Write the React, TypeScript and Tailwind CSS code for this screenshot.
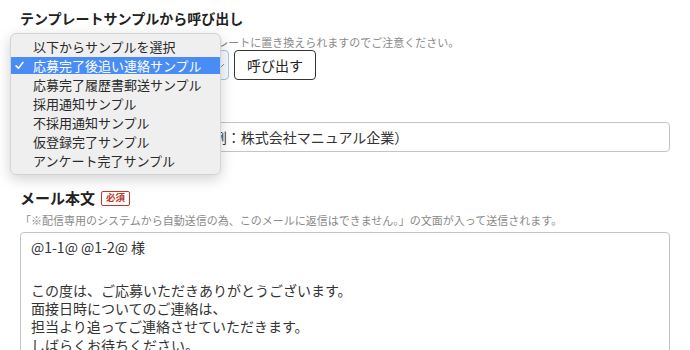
import { ChevronDown } from 'lucide-react'

const samples = [
  '以下からサンプルを選択',
  '応募完了後追い連絡サンプル',
  '応募完了履歴書郵送サンプル',
  '採用通知サンプル',
  '不採用通知サンプル',
  '仮登録完了サンプル',
  'アンケート完了サンプル'
]

const bodyLines = [
  'この度は、ご応募いただきありがとうございます。',
  '面接日時についてのご連絡は、',
  '担当より追ってご連絡させていただきます。',
  'しばらくお待ちください。'
]

function RequiredBadge() {
  return (
    <span className="ml-[6px] inline-flex h-[15px] items-center rounded-[2px] border border-[#c0392b] px-[4px] text-[9.5px] font-bold leading-none text-[#c0392b]">
      必須
    </span>
  )
}

function SampleMenu({ selected }: { selected: number }) {
  return (
    <ul className="absolute left-[10px] top-[33px] w-[211px] rounded-[6px] border border-[#d4d4d4] bg-[#efefef] pb-[4px] pt-[3px] shadow-[0_4px_14px_rgba(0,0,0,0.18)]">
      {samples.map((label, i) => (
        <li
          key={label}
          className={
            i === selected
              ? 'flex h-[19px] items-center bg-[#4a8cf6] bg-clip-content py-px text-[13px] text-white'
              : 'flex h-[19px] items-center text-[13px] text-[#2a2a2a]'
          }
        >
          <span className="flex w-[22px] shrink-0 pl-[4px]">
            {i === selected && (
              <svg width="9" height="9" viewBox="0 0 10 10" fill="none">
                <path d="M1.2 5.4 3.8 8 8.8 1.6" stroke="currentColor" strokeWidth="1.7" strokeLinecap="round" strokeLinejoin="round" />
              </svg>
            )}
          </span>
          <span className="whitespace-nowrap leading-none">{label}</span>
        </li>
      ))}
    </ul>
  )
}

export default function App() {
  return (
    <div
      className="relative h-[350px] w-[690px] overflow-hidden bg-white text-[#333]"
      style={{ fontFamily: '"Noto Sans CJK JP", "Noto Sans", sans-serif' }}
    >
      <div className="px-5 pt-[8px]">
        <h2 className="text-[14px] font-bold leading-[20px] text-[#222]">テンプレートサンプルから呼び出し</h2>
        <p className="mt-[6px] text-[11px] leading-[16px] text-[#8a8a8a]">
          サンプルを呼び出すと入力内容がテンプレートに置き換えられますのでご注意ください。
        </p>

        <div className="flex gap-[5px]">
          <div className="flex h-[30px] w-[209px] items-center justify-end rounded-[4px] border border-[#a9c4ee] bg-[#f6f9fe] pr-[2px] text-[14px]">
            <ChevronDown size={9} strokeWidth={2} className="text-[#555]" />
          </div>
          <button
            type="button"
            className="h-[30px] w-[82px] rounded-[4px] border border-[#333] bg-white text-[14px] text-[#222]"
          >
            呼び出す
          </button>
        </div>

        <div className="mt-[10px] flex h-[20px] items-center">
          <span className="text-[15px] font-bold text-[#222]">メール件名</span>
          <RequiredBadge />
        </div>
        <div className="mt-[12px] flex h-[30px] items-center rounded-[4px] border border-[#c4c4c4] px-[10px] text-[14px]">
          応募受付のお知らせ（会社名例：株式会社マニュアル企業）
        </div>

        <div className="mt-[36px] flex h-[20px] items-center">
          <span className="text-[15px] font-bold text-[#222]">メール本文</span>
          <RequiredBadge />
        </div>
        <p className="mt-[4px] text-[11px] leading-[16px] text-[#8a8a8a]">
          「※配信専用のシステムから自動送信の為、このメールに返信はできません。」の文面が入って送信されます。
        </p>

        <div className="mt-[4px] h-[160px] rounded-[4px] border border-[#c4c4c4] px-[10px] pt-[5px] text-[14px] leading-[18.3px]">
          <div>@1-1@ @1-2@ 様</div>
          <div className="h-[24.5px]" />
          {bodyLines.map((line) => (
            <div key={line} className="h-[18.3px]">
              {line}
            </div>
          ))}
        </div>
      </div>

      <SampleMenu selected={1} />
    </div>
  )
}
